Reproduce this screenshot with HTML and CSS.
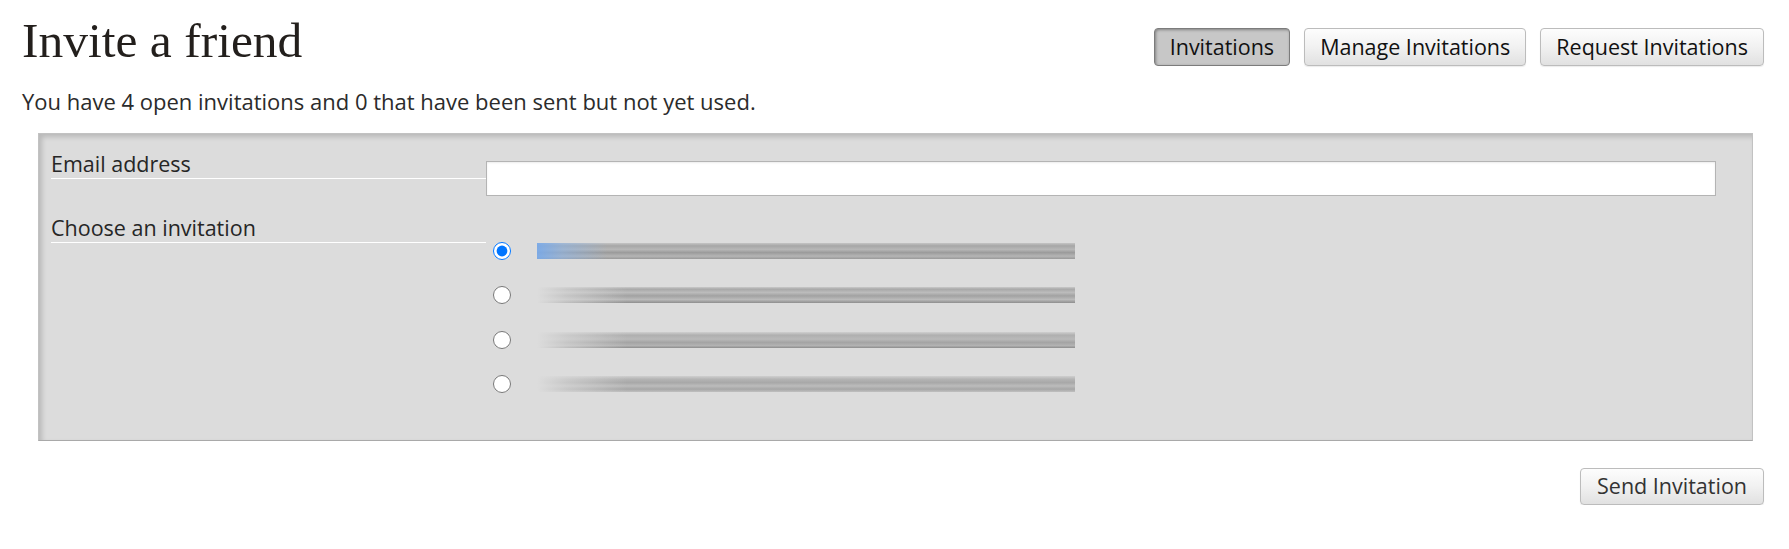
FILE: index.html
```html
<!DOCTYPE html>
<html lang="en">
<head>
<meta charset="utf-8">
<title>Invite a friend</title>
<link rel="stylesheet" href="styles.css">
</head>
<body>
<div class="header">
  <h1 class="title">Invite a friend</h1>
  <div class="tabs">
    <button class="btn btn-active" type="button">Invitations</button>
    <button class="btn" type="button">Manage Invitations</button>
    <button class="btn" type="button">Request Invitations</button>
  </div>
</div>
<p class="summary">You have 4 open invitations and 0 that have been sent but not yet used.</p>
<form class="panel">
  <div class="row">
    <label class="label" for="email">Email address</label>
    <input class="email" id="email" type="text">
  </div>
  <div class="row">
    <div class="label">Choose an invitation</div>
    <div class="options">
      <label class="option"><input class="radio" type="radio" name="inv" checked><span class="bar bar-sel"></span></label>
      <label class="option"><input class="radio" type="radio" name="inv"><span class="bar"></span></label>
      <label class="option"><input class="radio" type="radio" name="inv"><span class="bar bar-b"></span></label>
      <label class="option"><input class="radio" type="radio" name="inv"><span class="bar bar-c"></span></label>
    </div>
  </div>
</form>
<div class="actions">
  <button class="btn btn-send" type="button">Send Invitation</button>
</div>
</body>
</html>
```

FILE: styles.css
```css
html, body {
  margin: 0;
  background: #fff;
}
body {
  padding: 0 25px 0 22px;
  font-family: "Open Sans", "Liberation Sans", sans-serif;
  color: #2a2a2a;
}
.header {
  display: flex;
  justify-content: space-between;
  align-items: flex-start;
}
.title {
  margin: 11px 0 0;
  font-family: "Liberation Serif", "DejaVu Serif", serif;
  font-weight: normal;
  font-size: 49.5px;
  line-height: 60px;
  color: #231f1c;
}
.tabs {
  display: flex;
  gap: 14px;
  margin-top: 28px;
}
.btn {
  font-family: "Open Sans", "Liberation Sans", sans-serif;
  font-size: 21.5px;
  line-height: 28px;
  padding: 4px 15px;
  color: #111;
  background: linear-gradient(to bottom, #fdfdfd 0%, #f1f1f1 50%, #e1e1e1 100%);
  border: 1px solid #bcbcbc;
  border-radius: 4px;
  box-shadow: 0 1px 1px rgba(0,0,0,0.08);
  cursor: pointer;
}
.btn-active {
  background: #c7c7c7;
  border-color: #7c7c7c;
  box-shadow: inset 1px 1px 3px rgba(0,0,0,0.35);
}
.summary {
  margin: 15px 0 0;
  font-size: 22px;
  line-height: 30px;
  color: #2b2b2b;
}
.panel {
  margin: 17px 11px 0 16px;
  padding: 16px 36px 33px 12px;
  background: #dcdcdc;
  border: 1px solid #c2c2c2;
  border-bottom-color: #a9a9a9;
  box-shadow: inset 3px 3px 5px rgba(0,0,0,0.16);
}
.row {
  display: flex;
  align-items: flex-start;
}
.row + .row {
  margin-top: 18px;
}
.label {
  flex: 0 0 435px;
  font-size: 21.5px;
  line-height: 28px;
  color: #262626;
  border-bottom: 1px solid #fff;
}
.email {
  flex: 1;
  margin: 11px 0 0;
  height: 35px;
  box-sizing: border-box;
  border: 1px solid #b4b4b4;
  background: #fff;
  box-shadow: inset 0 1px 2px rgba(0,0,0,0.08);
  padding: 0 6px;
  font-family: "Open Sans", sans-serif;
  font-size: 18px;
}
.options {
  display: flex;
  flex-direction: column;
  margin-top: 14.5px;
}
.option {
  display: flex;
  align-items: center;
  height: 44.5px;
}
.radio {
  width: 18px;
  height: 18px;
  margin: 0 0 0 6.5px;
}
.bar {
  display: block;
  margin-left: 26.5px;
  width: 538px;
  height: 16px;
  background:
    linear-gradient(to right, #dcdcdc 0px, rgba(220,220,220,0.6) 30px, rgba(220,220,220,0) 90px),
    linear-gradient(to bottom, #c9c9c9 0%, #a8a8a8 14%, #bcbcbc 34%, #a2a2a2 55%, #bababa 78%, #8e8e8e 100%);
}
.bar-sel {
  background:
    linear-gradient(to right, rgba(120,170,235,0.9) 0px, rgba(140,180,230,0.6) 25px, rgba(220,220,220,0) 70px),
    linear-gradient(to bottom, #c4c4c4 0%, #a6a6a6 18%, #b7b7b7 40%, #9b9b9b 60%, #b5b5b5 82%, #999 100%);
}
.bar-b {
  background:
    linear-gradient(to right, #dcdcdc 0px, rgba(220,220,220,0.6) 30px, rgba(220,220,220,0) 90px),
    linear-gradient(to bottom, #d0d0d0 0%, #afafaf 20%, #b9b9b9 45%, #a4a4a4 65%, #b3b3b3 85%, #8c8c8c 100%);
}
.bar-c {
  background:
    linear-gradient(to right, #dcdcdc 0px, rgba(220,220,220,0.6) 30px, rgba(220,220,220,0) 90px),
    linear-gradient(to bottom, #cfcfcf 0%, #b4b4b4 20%, #a8a8a8 42%, #bcbcbc 62%, #a6a6a6 82%, #c0c0c0 100%);
}
.actions {
  display: flex;
  justify-content: flex-end;
  margin-top: 27px;
}
.btn-send {
  font-size: 21.5px;
  color: #333;
  padding: 3px 16px 4px;
}
```
